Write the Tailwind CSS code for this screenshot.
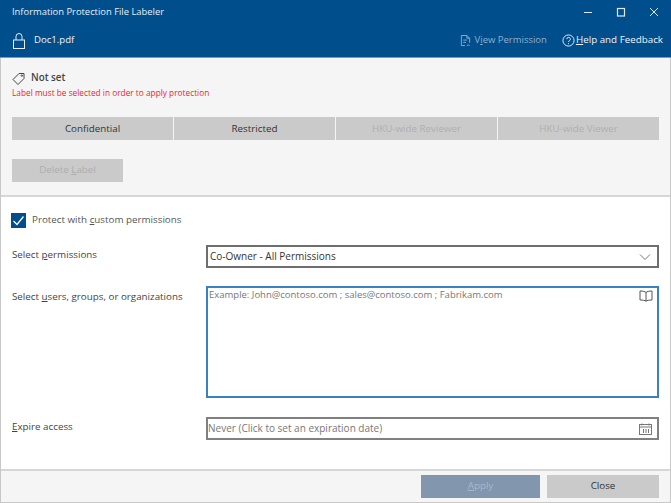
<!DOCTYPE html>
<html lang="en">
<head>
  <meta charset="UTF-8" />
  <title>Information Protection File Labeler</title>
  <script src="https://cdn.jsdelivr.net/npm/@tailwindcss/browser@4"></script>
</head>
<body class="w-[671px] h-[503px] overflow-hidden bg-white font-['Open_Sans',sans-serif] text-[9.8px] text-[#444]">
  <div class="h-[503px] flex flex-col border-l border-r border-b border-[#c8c8c8]">

    <!-- Title bar -->
    <div class="h-[58px] shrink-0 bg-[#004e8c] text-white border-b border-[#6f9cc4] -mx-px">
      <div class="h-[24px] flex items-center justify-between pl-[12px] pr-[11px]">
        <span class="text-[9.4px] text-[#e6eef5]">Information Protection File Labeler</span>
        <div class="flex items-center gap-[21px]">
          <svg width="12" height="12" viewBox="0 0 12 12" fill="none" stroke="#dfe8f0"><path d="M2 6.500h8"/></svg>
          <svg width="12" height="12" viewBox="0 0 12 12" fill="none" stroke="#dfe8f0" stroke-width="1.200"><rect x="2.500" y="2.500" width="7" height="7.500"/></svg>
          <svg width="12" height="12" viewBox="0 0 12 12" fill="none" stroke="#dfe8f0"><path d="M2 2l8 8M10 2l-8 8"/></svg>
        </div>
      </div>
      <div class="h-[33px] flex items-center justify-between pl-[13px] pr-[8px]">
        <div class="flex items-center gap-[9px]">
          <svg width="12" height="16" viewBox="0 0 12 16" fill="none" stroke="#e6eef5"><rect x=".5" y="7" width="11" height="8.500"/><path d="M3 7V3.500a3 3 0 0 1 6 0V7"/></svg>
          <span class="text-[9.6px] text-[#f0f4f8]">Doc1.pdf</span>
        </div>
        <div class="flex items-center">
          <svg class="mr-[4px]" width="11" height="14" viewBox="0 0 12 14" fill="none" stroke="#8fb0cc"><path d="M1.500 1h6l3 3v5M1.500 1v11h4M7.500 1v3h3M3.500 6h4M3.500 8.500h3"/><path d="M7.500 12.500l1.500-1.500 1.500 1.500"/></svg>
          <span class="text-[#8fb0cc] mr-[15px] text-[9.5px]">V<span class="underline">i</span>ew Permission</span>
          <svg class="mr-[1px]" width="13" height="13" viewBox="0 0 14 14" fill="none" stroke="#f0f4f8"><circle cx="7" cy="7" r="6"/><path d="M5.200 5.500a1.900 1.900 0 1 1 2.800 1.700c-.7.400-1 .8-1 1.500"/><path d="M7 10v1"/></svg>
          <span class="text-[#f0f4f8]"><span class="underline">H</span>elp and Feedback</span>
        </div>
      </div>
    </div>

    <!-- Label section -->
    <div class="h-[139px] shrink-0 bg-[#f5f5f5] border-b-2 border-[#d6d6d6] pl-[11px] pr-[11px] pt-[13px]">
      <div class="flex items-center gap-[6px] h-[14px]">
        <svg width="13" height="13" viewBox="0 0 13 13" fill="none" stroke="#444"><path d="M1 7.500L7 1.500h5v5l-6 6z"/><circle cx="9.800" cy="3.600" r=".7"/></svg>
        <span class="font-semibold text-[#444]">Not set</span>
      </div>
      <div class="mt-[1px] text-[8.3px] leading-[14px] text-[#f5202a]">Label must be selected in order to apply protection</div>
      <div class="mt-[17px] grid grid-cols-4 gap-[1px] w-[647px]">
        <div class="h-[23px] pt-[1px] flex items-center justify-center bg-[#cacaca] text-[#333]">Confidential</div>
        <div class="h-[23px] pt-[1px] flex items-center justify-center bg-[#cacaca] text-[#333]">Restricted</div>
        <div class="h-[23px] pt-[1px] flex items-center justify-center bg-[#cacaca] text-[#b0b0b0]">HKU-wide Reviewer</div>
        <div class="h-[23px] pt-[1px] flex items-center justify-center bg-[#cacaca] text-[#b0b0b0]">HKU-wide Viewer</div>
      </div>
      <div class="mt-[19px] w-[111px] h-[23px] flex items-center justify-center bg-[#cacaca] text-[#aeaeae]">
        <span>Delete <span class="underline">L</span>abel</span>
      </div>
    </div>

    <!-- Permissions form -->
    <div class="flex-1 pl-[11px] pr-[11px] pt-[15px]">
      <div class="flex items-center gap-[6px] h-[16px] -ml-px">
        <div class="w-[15px] h-[15px] bg-[#004e8c] flex items-center justify-center">
          <svg width="13" height="13" viewBox="0 0 13 13" fill="none" stroke="#fff" stroke-width="1.300"><path d="M1.500 7l3.500 3.500 6.500-8"/></svg>
        </div>
        <span class="text-[#555]">Protect with <span class="underline">c</span>ustom permissions</span>
      </div>

      <div class="mt-[17px] flex">
        <div class="w-[194px] pt-[3px]">Select <span class="underline">p</span>ermissions</div>
        <div class="flex-1 h-[23px] border-2 border-[#6e6e6e] flex items-center justify-between pl-[2px] pr-[6px] text-[#333]">
          <span class="text-[10px]">Co-Owner - All Permissions</span>
          <svg width="12" height="8" viewBox="0 0 12 8" fill="none" stroke="#777"><path d="M1 1.500l5 5 5-5"/></svg>
        </div>
      </div>

      <div class="mt-[18px] flex">
        <div class="w-[194px] pt-[4px]">Select <span class="underline">u</span>sers, groups, or organizations</div>
        <div class="flex-1 h-[112px] border-2 border-[#3a80c4] flex items-start justify-between pl-[1px] pr-[4px] text-[#777]">
          <span class="text-[9.5px]">Example: John@contoso.com ; sales@contoso.com ; Fabrikam.com</span>
          <svg class="mt-[2px]" width="14" height="12" viewBox="0 0 14 12" fill="none" stroke="#555"><path d="M7 2.500C6 1.500 4 1 1 1v9c3 0 5 .4 6 1.200 1-.8 3-1.200 6-1.200V1c-3 0-5 .5-6 1.500zM7 2.500v8.700"/></svg>
        </div>
      </div>

      <div class="mt-[19px] flex">
        <div class="w-[194px] pt-[3px]"><span class="underline">E</span>xpire access</div>
        <div class="flex-1 h-[23px] border-2 border-[#808080] flex items-center justify-between pl-[0px] pr-[5px] text-[#777]">
          <span class="text-[10px]">Never (Click to set an expiration date)</span>
          <svg width="13" height="12" viewBox="0 0 13 12" fill="none" stroke="#777"><rect x=".5" y="1.500" width="12" height="10"/><path d="M.5 4h12M3 .5v2M10 .5v2M4.500 6v4M7 6v4M9.500 6v4"/></svg>
        </div>
      </div>
    </div>

    <!-- Footer -->
    <div class="h-[33px] shrink-0 bg-[#f5f5f5] border-t-2 border-[#d6d6d6] flex items-center justify-end gap-[7px] pr-[11px]">
      <div class="w-[119px] h-[23px] flex items-center justify-center bg-[#8296ae] text-[#a9b8ca]"><span><span class="underline">A</span>pply</span></div>
      <div class="w-[112px] h-[23px] flex items-center justify-center bg-[#cacaca] text-[#333]">Close</div>
    </div>
  </div>
</body>
</html>
